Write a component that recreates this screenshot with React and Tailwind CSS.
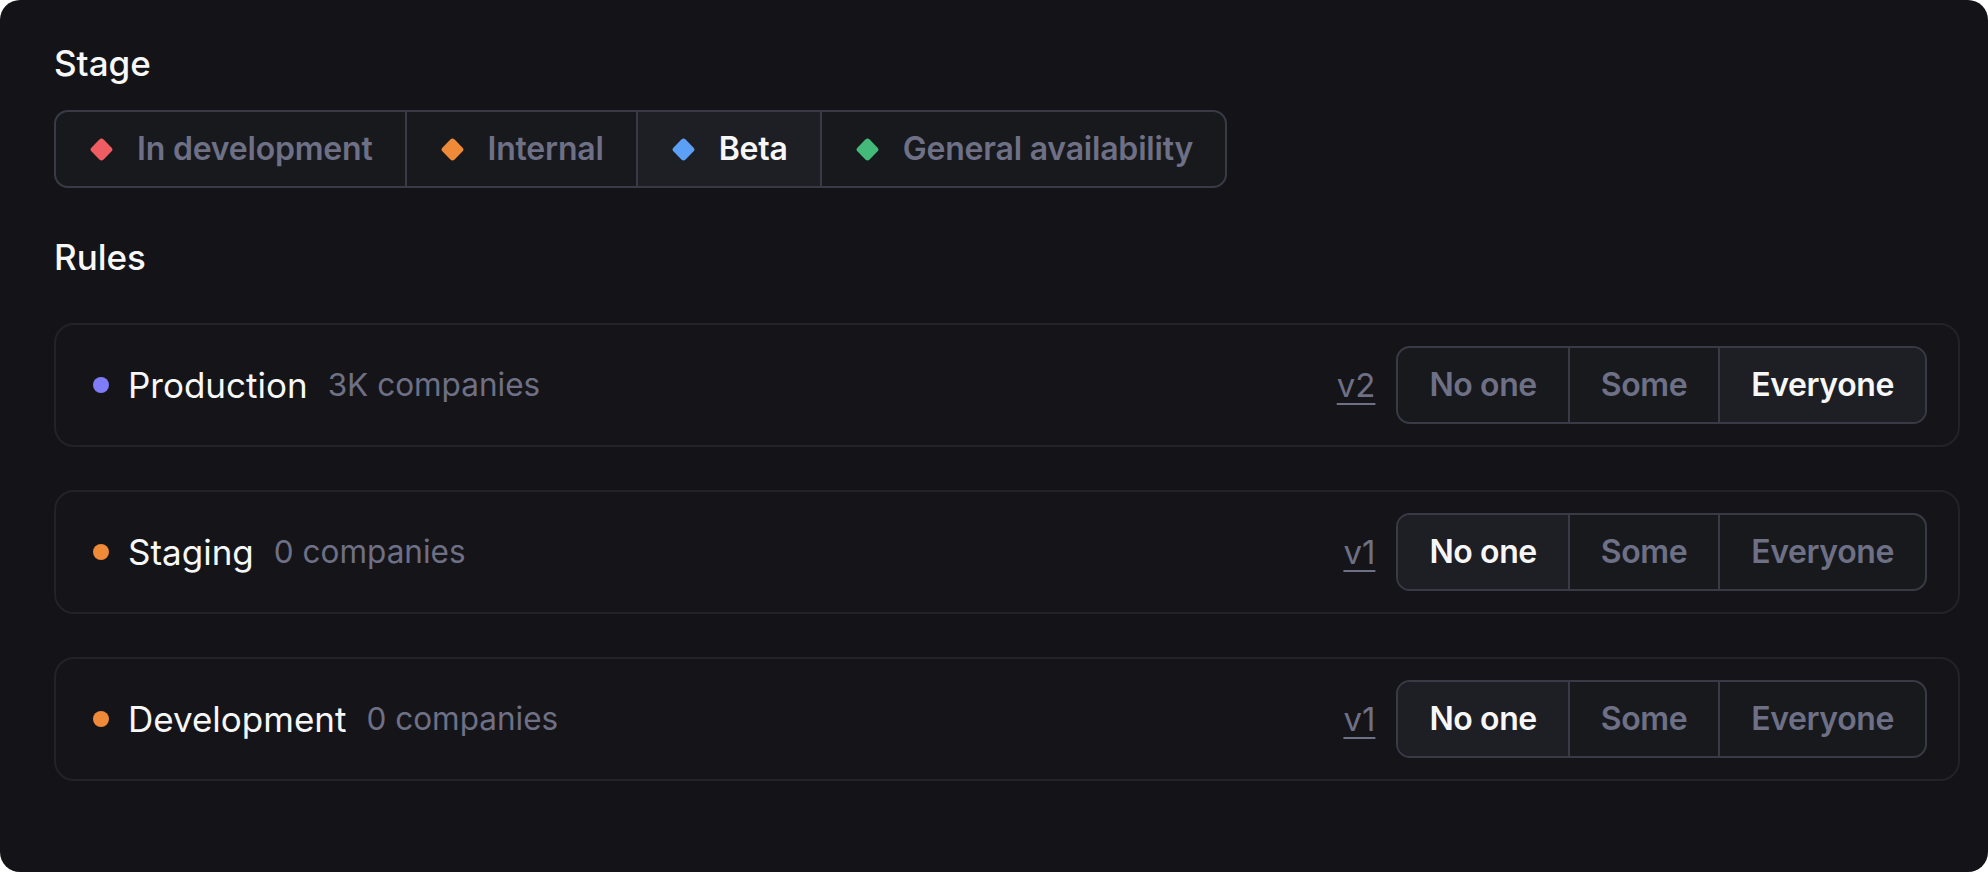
import React from "react";

const stages = [
  { label: "In development", color: "bg-[#ef5d63]", active: false },
  { label: "Internal", color: "bg-[#ee8a38]", active: false },
  { label: "Beta", color: "bg-[#5b9ff6]", active: true },
  { label: "General availability", color: "bg-[#43b97a]", active: false },
];

const rules = [
  { name: "Production", count: "3K companies", dot: "bg-[#7f7cf7]", version: "v2", active: 2 },
  { name: "Staging", count: "0 companies", dot: "bg-[#ee8a38]", version: "v1", active: 0 },
  { name: "Development", count: "0 companies", dot: "bg-[#ee8a38]", version: "v1", active: 0 },
];

const options = ["No one", "Some", "Everyone"];

function Diamond({ color }) {
  return (
    <span className="flex h-[23px] w-[23px] items-center justify-center">
      <span className={`block h-[17px] w-[17px] rotate-45 rounded-[3px] ${color}`} />
    </span>
  );
}

function StageControl() {
  return (
    <div className="inline-flex h-[78px] overflow-hidden rounded-[14px] border-2 border-[#393a45] bg-[#18191d]">
      {stages.map((s, i) => (
        <div
          key={s.label}
          className={`flex items-center gap-[24px] pl-[34px] pr-[32px] ${i > 0 ? "border-l-2 border-[#393a45]" : ""} ${s.active ? "bg-[#1e1f24] text-[#f7f7f8]" : "text-[#6e7086]"}`}
        >
          <Diamond color={s.color} />
          <span className="text-[32px] font-semibold leading-none tracking-[-0.2px]">{s.label}</span>
        </div>
      ))}
    </div>
  );
}

function RuleControl({ active }) {
  return (
    <div className="flex h-[78px] overflow-hidden rounded-[14px] border-2 border-[#393a45] bg-[#18191d]">
      {options.map((o, i) => (
        <div
          key={o}
          className={`flex items-center px-[31px] ${i > 0 ? "border-l-2 border-[#393a45]" : ""} ${active === i ? "bg-[#1e1f24] text-[#f7f7f8]" : "text-[#6e7086]"}`}
        >
          <span className="text-[32px] font-semibold leading-none tracking-[-0.4px]">{o}</span>
        </div>
      ))}
    </div>
  );
}

function RuleRow({ r }) {
  return (
    <div className="flex items-center justify-between rounded-[20px] border-2 border-[#222329] bg-[#151519] py-[21px] pl-[37px] pr-[31px]">
      <div className="flex items-center">
        <span className={`h-[16px] w-[16px] rounded-full ${r.dot}`} />
        <span className="ml-[19px] text-[35px] font-normal leading-none text-[#f7f7f8]">{r.name}</span>
        <span className="ml-[20px] text-[31.5px] font-normal leading-none text-[#6e7086]">{r.count}</span>
      </div>
      <div className="flex items-center gap-[21px]">
        <span className="text-[33px] leading-none text-[#6e7086] underline decoration-2 underline-offset-[6px]">{r.version}</span>
        <RuleControl active={r.active} />
      </div>
    </div>
  );
}

export default function App() {
  return (
    <div className="min-h-screen bg-white" style={{ fontFamily: "Inter, 'Noto Sans', sans-serif" }}>
      <div className="flex h-[872px] w-full flex-col rounded-[20px] bg-[#141418] pl-[54px] pr-[28px] pt-[42px]">
        <div className="text-[35px] font-medium leading-[42px] text-[#f7f7f8]">Stage</div>
        <div className="mt-[26px]">
          <StageControl />
        </div>
        <div className="mt-[48px] text-[35px] font-medium leading-[42px] text-[#f7f7f8]">Rules</div>
        <div className="mt-[45px] flex flex-col gap-[43px]">
          {rules.map((r) => (
            <RuleRow key={r.name} r={r} />
          ))}
        </div>
      </div>
    </div>
  );
}
